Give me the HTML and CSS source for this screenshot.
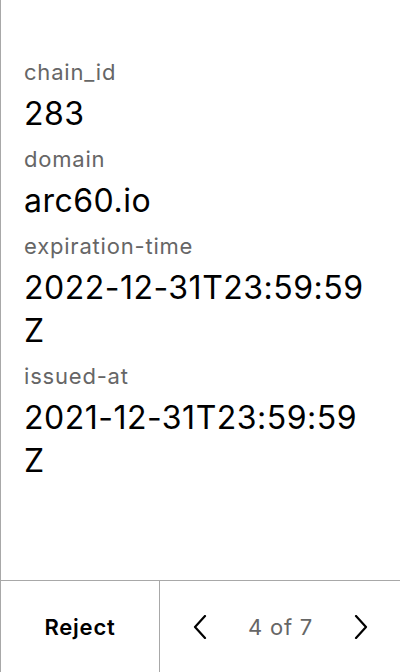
FILE: index.html
```html
<!DOCTYPE html>
<html>
<head>
<meta charset="utf-8">
<link rel="stylesheet" href="styles.css">
</head>
<body>
<div class="panel">
  <div class="content">
    <div class="field">
      <div class="label">chain_id</div>
      <div class="value">283</div>
    </div>
    <div class="field">
      <div class="label">domain</div>
      <div class="value">arc60.io</div>
    </div>
    <div class="field">
      <div class="label">expiration-time</div>
      <div class="value">2022-12-31T23:59:59Z</div>
    </div>
    <div class="field">
      <div class="label">issued-at</div>
      <div class="value">2021-12-31T23:59:59Z</div>
    </div>
  </div>
  <div class="footer">
    <button class="reject">Reject</button>
    <div class="pager">
      <svg class="chev" width="16" height="24" viewBox="0 0 16 24"><path d="M13 1 L3 12 L13 23" fill="none" stroke="#000" stroke-width="2.2" stroke-linecap="round" stroke-linejoin="round"/></svg>
      <span class="count">4 of 7</span>
      <svg class="chev" width="16" height="24" viewBox="0 0 16 24"><path d="M3 1 L13 12 L3 23" fill="none" stroke="#000" stroke-width="2.2" stroke-linecap="round" stroke-linejoin="round"/></svg>
    </div>
  </div>
</div>
</body>
</html>
```
FILE: styles.css
```css
html, body {
  margin: 0;
  padding: 0;
  height: 100%;
  background: #fff;
}
body {
  font-family: Inter, "Noto Sans", sans-serif;
  color: #000;
}
.panel {
  height: 672px;
  border-left: 1px solid #a8a8a8;
  box-sizing: border-box;
  display: flex;
  flex-direction: column;
}
.content {
  flex: 1;
  padding: 58px 24px 0 23px;
  display: flex;
  flex-direction: column;
  gap: 10px;
}
.label {
  font-size: 22px;
  line-height: 28px;
  letter-spacing: 0.8px;
  color: #666;
}
.value {
  font-size: 32px;
  line-height: 43px;
  margin-top: 6px;
  letter-spacing: 0.5px;
  word-break: break-all;
}
.footer {
  height: 92px;
  border-top: 1px solid #a8a8a8;
  box-sizing: border-box;
  display: flex;
}
.reject {
  width: 159px;
  border: none;
  border-right: 1px solid #a8a8a8;
  background: none;
  font-family: Inter, "Noto Sans", sans-serif;
  font-weight: 600;
  font-size: 22px;
  letter-spacing: 0.8px;
  color: #000;
  padding: 0;
}
.pager {
  flex: 1;
  display: flex;
  align-items: center;
  justify-content: space-between;
  padding: 0 31px 0 32px;
}
.count {
  font-size: 22px;
  letter-spacing: 0.8px;
  color: #666;
}
```
